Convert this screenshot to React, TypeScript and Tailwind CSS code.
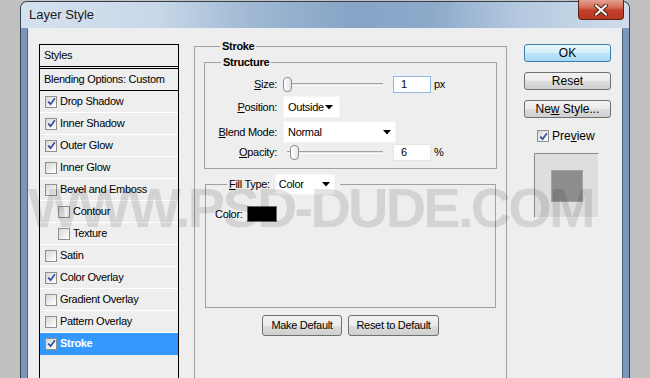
import React from 'react';

const Check = ({ checked = false }: { checked?: boolean }) => (
  <span className="w-[12px] h-[12px] shrink-0 border border-[#8e8f8f] bg-[linear-gradient(135deg,#d6d6d6_0%,#f4f4f4_70%,#ffffff_100%)] flex items-center justify-center">
    {checked && (
      <svg width="9" height="9" viewBox="0 0 9 9">
        <path d="M1.2 4.6 L3.6 7.2 L7.9 1.2" stroke="#3a4a9e" strokeWidth="1.7" fill="none" />
      </svg>
    )}
  </span>
);

const Arrow = () => (
  <svg width="8" height="5" viewBox="0 0 8 5">
    <path d="M0 0 H8 L4 4.5 Z" fill="#000" />
  </svg>
);

const styles = [
  { name: 'Drop Shadow', checked: true },
  { name: 'Inner Shadow', checked: true },
  { name: 'Outer Glow', checked: true },
  { name: 'Inner Glow', checked: false },
  { name: 'Bevel and Emboss', checked: false },
  { name: 'Contour', checked: false, sub: true },
  { name: 'Texture', checked: false, sub: true },
  { name: 'Satin', checked: false },
  { name: 'Color Overlay', checked: true },
  { name: 'Gradient Overlay', checked: false },
  { name: 'Pattern Overlay', checked: false },
  { name: 'Stroke', checked: true, active: true },
];

const Slider = ({ thumb }: { thumb: string }) => (
  <div className="relative w-[100px] h-[17px] flex items-center">
    <div className="ml-[4px] w-[96px] h-[3px] border-t border-[#a3a3a3] border-b border-b-white bg-[#e2e2e2]" />
    <div className={`absolute top-[1px] ${thumb} w-[9px] h-[15px] rounded-[4px] border border-[#8c8c8c] bg-[linear-gradient(90deg,#ffffff,#e4e4e4)]`} />
  </div>
);

const SmallButton = ({ label, primary = false, children }: { label?: string; primary?: boolean; children?: React.ReactNode }) => (
  <div
    className={`h-[18px] w-[87px] rounded-[3px] border flex items-center justify-center text-[12px] tracking-normal ${
      primary
        ? 'border-[#3c7fb1] bg-[linear-gradient(180deg,#e8f6fd_0%,#d6eefb_50%,#bde4f8_51%,#a7d9f5_100%)]'
        : 'border-[#707070] bg-[linear-gradient(180deg,#f2f2f2_0%,#ebebeb_50%,#dddddd_51%,#cfcfcf_100%)]'
    }`}
  >
    {label}
    {children}
  </div>
);

export default function App() {
  return (
    <div className="w-[650px] h-[378px] overflow-hidden bg-[#c0c0c0] pl-[20px] pt-[1px] font-['Liberation_Sans',Arial,sans-serif] text-[11px] tracking-[-0.3px] text-black">
      {/* Window */}
      <div className="w-[610px] h-[380px] rounded-t-[7px] border border-[#34414f] border-b-0 bg-[#7b97b9] flex flex-col">
        {/* Title bar */}
        <div className="h-[26px] shrink-0 rounded-t-[6px] flex items-start justify-between bg-[linear-gradient(90deg,#d4e1ee_0%,#c9d8e9_22%,#9fb8d3_38%,#86a4c6_55%,#8eaacb_68%,#b4c9df_82%,#d0ddeb_100%)]">
          <span className="pl-[8px] leading-[26px] text-[13px] tracking-normal text-[#1b1b1b]">Layer Style</span>
          <div className="-mt-[2px] mr-[5px] w-[46px] h-[20px] rounded-b-[4px] border border-[#5b2219] border-t-0 bg-[linear-gradient(180deg,#e3a293_0%,#d46a55_40%,#c2402a_55%,#b8361f_100%)] flex items-center justify-center">
            <svg width="14" height="12" viewBox="0 0 14 12">
              <path d="M2 1.5 L12 10.5 M12 1.5 L2 10.5" stroke="#4a1a12" strokeWidth="4" strokeLinecap="round" />
              <path d="M2 1.5 L12 10.5 M12 1.5 L2 10.5" stroke="#ffffff" strokeWidth="2.2" strokeLinecap="round" />
            </svg>
          </div>
        </div>

        {/* Client area */}
        <div className="relative flex-1 mx-[6px] border-l border-r border-t border-[#4d6178] border-t-[#e9eef4] bg-[#eeeeee] overflow-hidden">
          <div className="flex items-start pl-[11px] pt-[11px]">
            {/* Styles list */}
            <div className="mt-[4px] w-[140px] h-[340px] shrink-0 border border-black border-b-0">
              <div className="h-[22px] border-b border-black pl-[4px] flex items-center">Styles</div>
              <div className="h-[1px] bg-[#f6f6f6]" />
              <div className="h-[23px] border-t border-b border-black pl-[4px] flex items-center">Blending Options: Custom</div>
              {styles.map((s) => (
                <div
                  key={s.name}
                  className={`h-[22px] border-b flex items-center gap-[2px] ${
                    s.active ? 'bg-[#3399ff] border-[#3399ff] text-white font-bold' : 'border-white'
                  } ${s.sub ? 'pl-[18px]' : 'pl-[5px]'}`}
                >
                  <Check checked={s.checked} />
                  <span className="ml-[1px]">{s.name}</span>
                </div>
              ))}
            </div>

            {/* Stroke group */}
            <fieldset className="ml-[15px] w-[313px] h-[360px] shrink-0 border border-[#a0a0a0] px-[9px] pt-[3px]">
              <legend className="ml-[16px] px-[2px] leading-[13px] font-bold">Stroke</legend>

              <fieldset className="border border-[#a0a0a0] pt-[7px] pb-[7px]">
                <legend className="ml-[16px] px-[2px] leading-[13px] font-bold">Structure</legend>

                <div className="flex items-center h-[17px]">
                  <span className="w-[72px] text-right"><span className="underline">S</span>ize:</span>
                  <span className="ml-[6px]"><Slider thumb="left-[0px]" /></span>
                  <div className="ml-[10px] w-[38px] h-[17px] bg-white border border-[#8fb8e3] pl-[7px] flex items-center">1</div>
                  <span className="ml-[3px]">px</span>
                </div>

                <div className="flex items-center h-[22px] mt-[3px]">
                  <span className="w-[72px] text-right"><span className="underline">P</span>osition:</span>
                  <div className="ml-[6px] w-[57px] h-[22px] bg-white border border-[#f4f4f4] pl-[4px] pr-[6px] flex items-center justify-between">
                    <span>Outside</span>
                    <Arrow />
                  </div>
                </div>

                <div className="flex items-center h-[22px] mt-[3px]">
                  <span className="w-[72px] text-right"><span className="underline">B</span>lend Mode:</span>
                  <div className="ml-[6px] w-[113px] h-[22px] bg-white border border-[#f4f4f4] pl-[4px] pr-[4px] flex items-center justify-between">
                    <span>Normal</span>
                    <Arrow />
                  </div>
                </div>

                <div className="flex items-center h-[17px] mt-[1px]">
                  <span className="w-[72px] text-right"><span className="underline">O</span>pacity:</span>
                  <span className="ml-[6px]"><Slider thumb="left-[7px]" /></span>
                  <div className="ml-[10px] w-[38px] h-[17px] bg-white border border-[#e6e6e6] pl-[7px] flex items-center">6</div>
                  <span className="ml-[3px]">%</span>
                </div>
              </fieldset>

              <fieldset className="mt-[5px] mx-[1px] border border-[#a0a0a0] pl-[9px] pt-[11px] pb-[85px]">
                <legend className="ml-[12px] pl-[2px] pr-[5px] flex items-center">
                  <span><span className="underline">F</span>ill Type:</span>
                  <div className="ml-[5px] w-[60px] h-[21px] bg-white border border-[#f4f4f4] pl-[3px] pr-[4px] flex items-center justify-between">
                    <span>Color</span>
                    <Arrow />
                  </div>
                </legend>
                <div className="flex items-center h-[16px]">
                  <span>Color:</span>
                  <div className="ml-[4px] w-[30px] h-[16px] bg-black border border-[#6a6a6a]" />
                </div>
              </fieldset>

              <div className="mt-[7px] flex justify-center gap-[6px]">
                <div className="w-[80px] h-[21px] rounded-[3px] border border-[#707070] bg-[linear-gradient(180deg,#f2f2f2_0%,#ebebeb_50%,#dddddd_51%,#cfcfcf_100%)] flex items-center justify-center">Make Default</div>
                <div className="w-[91px] h-[21px] rounded-[3px] border border-[#707070] bg-[linear-gradient(180deg,#f2f2f2_0%,#ebebeb_50%,#dddddd_51%,#cfcfcf_100%)] flex items-center justify-center">Reset to Default</div>
              </div>
            </fieldset>

            {/* Right column */}
            <div className="mt-[4px] ml-[17px] w-[87px] flex flex-col">
              <SmallButton label="OK" primary />
              <div className="mt-[10px]"><SmallButton label="Reset" /></div>
              <div className="mt-[10px]">
                <SmallButton>
                  <span>Ne<span className="underline">w</span> Style...</span>
                </SmallButton>
              </div>
              <div className="mt-[9px] ml-[13px] flex items-center gap-[3px] text-[12px] tracking-normal">
                <Check checked />
                <span>Pre<span className="underline">v</span>iew</span>
              </div>
              <div className="mt-[8px] ml-[10px] w-[65px] h-[65px] border-l border-t border-[#8a8a8a] border-r border-r-[#f4f4f4] border-b border-b-[#f4f4f4] bg-[#dedede] flex items-center justify-center">
                <div className="w-[32px] h-[32px] bg-[#8d8d8d] border border-[#a3a3a3]" />
              </div>
            </div>
          </div>

          {/* Watermark */}
          <div className="pointer-events-none select-none absolute left-[0px] top-[151px] whitespace-nowrap font-bold text-[56px] leading-none tracking-[-2.8px] text-black/[0.11]">
            WWW.PSD-DUDE.COM
          </div>
        </div>
      </div>
    </div>
  );
}
